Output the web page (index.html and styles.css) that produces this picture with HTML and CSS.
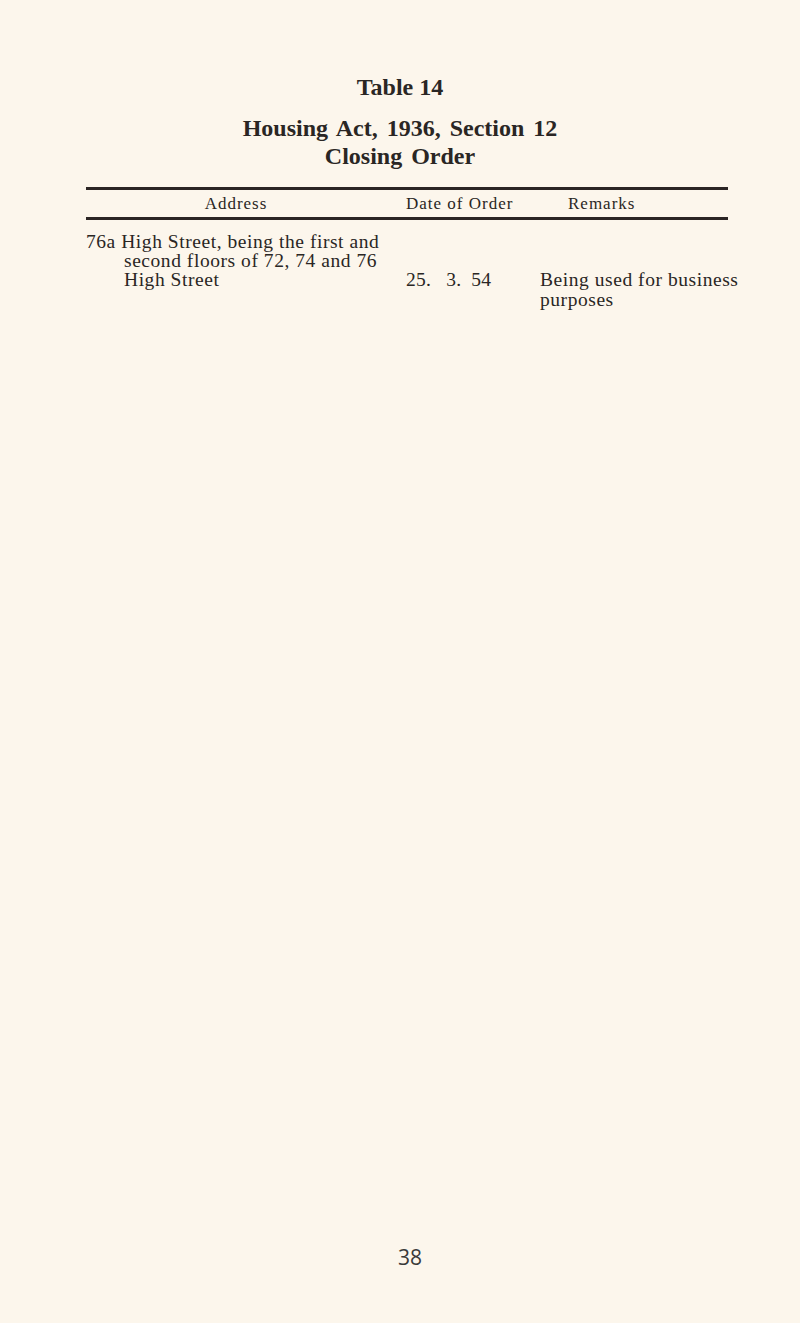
FILE: index.html
```html
<!DOCTYPE html>
<html>
<head>
<meta charset="utf-8">
<link rel="stylesheet" href="styles.css">
</head>
<body>
<div class="page">
  <h1 class="title">Table 14</h1>
  <h2 class="subtitle">Housing Act, 1936, Section 12<br>Closing Order</h2>
  <div class="rule rule-top"></div>
  <div class="head">
    <span class="h-addr">Address</span>
    <span class="h-date">Date of Order</span>
    <span class="h-rem">Remarks</span>
  </div>
  <div class="rule"></div>
  <div class="row">
    <div class="addr">
      <div class="line">76a High Street, being the first and</div>
      <div class="line ind">second floors of 72, 74 and 76</div>
      <div class="line ind">High Street</div>
    </div>
    <div class="date">25.&nbsp;&nbsp; 3.&nbsp; 54</div>
    <div class="rem">
      <div class="line">Being used for business</div>
      <div class="line">purposes</div>
    </div>
  </div>
  <div class="spacer"></div>
  <div class="pageno">38</div>
</div>
</body>
</html>
```

FILE: styles.css
```css
html, body {
  margin: 0;
  padding: 0;
  background: #fcf6ec;
}
.page {
  width: 800px;
  height: 1323px;
  display: flex;
  flex-direction: column;
  color: #2a2624;
  font-family: "Liberation Serif", "Times New Roman", serif;
}
.title {
  margin: 72px 0 0;
  text-align: center;
  font-size: 24px;
  font-weight: bold;
  line-height: 30px;
}
.subtitle {
  margin: 12px 0 0;
  text-align: center;
  font-size: 24px;
  font-weight: bold;
  line-height: 28px;
  word-spacing: 3px;
}
.rule {
  margin: 0 72px 0 86px;
  height: 3px;
  background: #2b2524;
}
.rule-top {
  margin-top: 17px;
}
.head {
  display: flex;
  height: 27px;
  align-items: center;
  margin-left: 86px;
  font-size: 17px;
  letter-spacing: 1px;
}
.h-addr {
  width: 320px;
  padding-right: 20px;
  box-sizing: border-box;
  text-align: center;
}
.h-date { width: 162px; }
.row {
  display: flex;
  margin-top: 12px;
  margin-left: 86px;
  font-size: 19.5px;
  letter-spacing: 0.55px;
  line-height: 19px;
}
.addr { width: 320px; }
.ind { padding-left: 38px; }
.date {
  width: 134px;
  padding-top: 38px;
  line-height: 19px;
  letter-spacing: 0.2px;
}
.rem {
  padding-top: 38px;
  line-height: 20px;
}
.spacer { flex: 1; }
.pageno {
  text-align: center;
  padding-left: 20px;
  font-family: "Open Sans", sans-serif;
  font-size: 21px;
  margin-bottom: 52px;
  color: #3a3a3a;
}
```
